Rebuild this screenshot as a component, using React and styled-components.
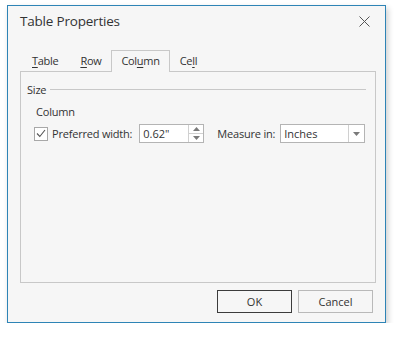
import React from 'react'
import styled, { createGlobalStyle } from 'styled-components'

const GlobalStyle = createGlobalStyle`
  body {
    margin: 0;
    background: #ffffff;
    font-family: "Open Sans", "Noto Sans", sans-serif;
    color: #333;
  }
`

const Page = styled.div`
  padding: 5px 0 0 7px;
`

const Dialog = styled.div`
  box-sizing: border-box;
  width: 379px;
  height: 318px;
  border: 1px solid #2e84b6;
  background: #f6f6f6;
  box-shadow: 2px 3px 6px rgba(0, 0, 0, 0.2);
  display: flex;
  flex-direction: column;
  padding: 0 9px 9px 12px;
`

const TitleBar = styled.div`
  height: 30px;
  display: flex;
  align-items: center;
  justify-content: space-between;
`

const Title = styled.div`
  font-size: 13.5px;
  letter-spacing: -0.2px;
  color: #333;
`

const Close = styled.svg`
  width: 11px;
  height: 11px;
  margin-right: 6px;
`

const TabStrip = styled.div`
  margin-top: 14px;
  display: flex;
  height: 22px;
  position: relative;
  z-index: 1;
`

const Tab = styled.div`
  padding: 0 ${p => p.$pad || 10}px;
  font-size: 11px;
  letter-spacing: -0.3px;
  line-height: 20px;
  color: #333;
  border: 1px solid ${p => (p.$active ? '#c8c8c8' : 'transparent')};
  border-bottom: none;
  background: ${p => (p.$active ? '#f6f6f6' : 'transparent')};
  height: 22px;
  box-sizing: border-box;
  u {
    text-decoration: underline;
    text-underline-offset: 2px;
  }
`

const Panel = styled.div`
  flex: 1;
  border: 1px solid #c8c8c8;
  margin-top: -1px;
  padding: 10px 9px 0 6px;
  display: flex;
  flex-direction: column;
`

const Text = styled.span`
  font-size: 11px;
  letter-spacing: -0.2px;
  white-space: nowrap;
`

const GroupHeader = styled.div`
  display: flex;
  align-items: center;
  gap: 4px;
  height: 14px;
  &::after {
    content: '';
    flex: 1;
    height: 1px;
    background: #c8c8c8;
  }
`

const SubLabel = styled.div`
  margin: 5px 0 0 9px;
  height: 18px;
  line-height: 18px;
`

const Row = styled.div`
  display: flex;
  align-items: center;
  margin: 5px 0 0 7px;
  height: 19px;
`

const CheckBox = styled.div`
  width: 12px;
  height: 12px;
  border: 1px solid #a8a8a8;
  background: #fff;
  display: flex;
  align-items: center;
  justify-content: center;
  margin-right: 4px;
`

const Label = styled(Text)`
  margin-left: ${p => p.$before || 0}px;
  margin-right: ${p => p.$gap || 0}px;
`

const Spin = styled.div`
  width: 63px;
  height: 17px;
  border: 1px solid #b4b4b4;
  background: #fff;
  display: flex;
`

const Value = styled.div`
  flex: 1;
  font-size: 11px;
  line-height: 17px;
  padding-left: 3px;
`

const SpinButtons = styled.div`
  width: 14px;
  border-left: 1px solid #d0d0d0;
  display: flex;
  flex-direction: column;
`

const SpinBtn = styled.div`
  flex: 1;
  display: flex;
  align-items: center;
  justify-content: center;
  & + & {
    border-top: 1px solid #d0d0d0;
  }
`

const Combo = styled.div`
  width: 83px;
  height: 17px;
  border: 1px solid #b4b4b4;
  background: #fff;
  display: flex;
`

const DropBtn = styled.div`
  width: 15px;
  border-left: 1px solid #d0d0d0;
  display: flex;
  align-items: center;
  justify-content: center;
`

const Footer = styled.div`
  display: flex;
  justify-content: flex-end;
  gap: 6px;
  padding: 7px 3px 0 0;
`

const Button = styled.div`
  width: 73px;
  height: 21px;
  border: 1px solid ${p => (p.$default ? '#3c3c3c' : '#b9b9b9')};
  background: #f6f6f6;
  font-size: 11px;
  display: flex;
  align-items: center;
  justify-content: center;
`

const Triangle = ({ up }) => (
  <svg width="7" height="4" viewBox="0 0 7 4">
    <path d={up ? 'M0 4 L3.5 0 L7 4 Z' : 'M0 0 L3.5 4 L7 0 Z'} fill="#7a7a7a" />
  </svg>
)

export default function App() {
  return (
    <>
      <GlobalStyle />
      <Page>
        <Dialog>
          <TitleBar>
            <Title>Table Properties</Title>
            <Close viewBox="0 0 11 11">
              <path d="M0.5 0.5 L10.5 10.5 M10.5 0.5 L0.5 10.5" stroke="#555" strokeWidth="1" />
            </Close>
          </TitleBar>
          <TabStrip>
            <Tab $pad={11}><u>T</u>able</Tab>
            <Tab $pad={9}><u>R</u>ow</Tab>
            <Tab $active $pad={9}>Col<u>u</u>mn</Tab>
            <Tab $pad={9}>Ce<u>l</u>l</Tab>
          </TabStrip>
          <Panel>
            <GroupHeader><Text>Size</Text></GroupHeader>
            <SubLabel><Text>Column</Text></SubLabel>
            <Row>
              <CheckBox>
                <svg width="10" height="9" viewBox="0 0 10 9">
                  <path d="M1 4.5 L3.8 7.5 L9 1" stroke="#555" strokeWidth="1.1" fill="none" />
                </svg>
              </CheckBox>
              <Label $gap={7}>Preferred width:</Label>
              <Spin>
                <Value>0.62"</Value>
                <SpinButtons>
                  <SpinBtn><Triangle up /></SpinBtn>
                  <SpinBtn><Triangle /></SpinBtn>
                </SpinButtons>
              </Spin>
              <Label $before={13} $gap={5}>Measure in:</Label>
              <Combo>
                <Value>Inches</Value>
                <DropBtn><Triangle /></DropBtn>
              </Combo>
            </Row>
          </Panel>
          <Footer>
            <Button $default>OK</Button>
            <Button>Cancel</Button>
          </Footer>
        </Dialog>
      </Page>
    </>
  )
}
